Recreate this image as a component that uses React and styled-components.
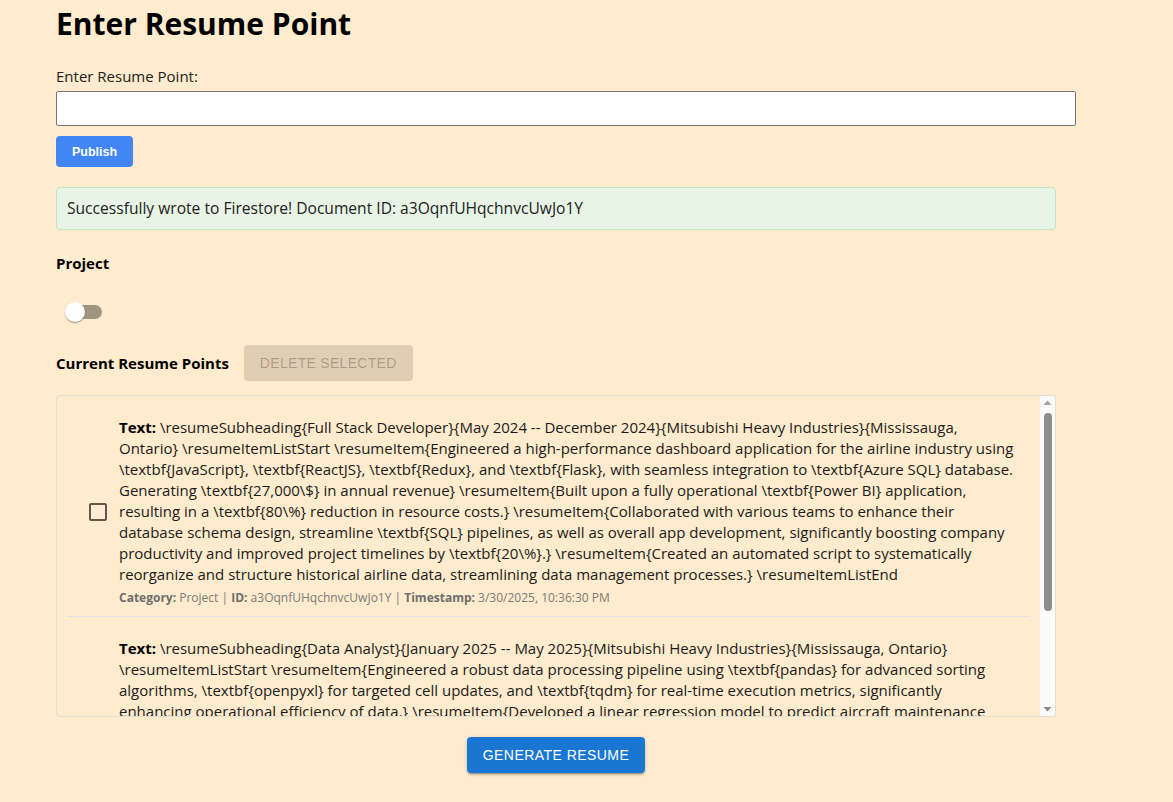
import React, { useState } from "react";
import styled, { createGlobalStyle } from "styled-components";

const GlobalStyle = createGlobalStyle`
  body {
    margin: 0;
    background: #ffebcd;
    font-family: "Open Sans", "Noto Sans", sans-serif;
    color: #111;
  }
`;

const points = [
  {
    id: "a3OqnfUHqchnvcUwJo1Y",
    category: "Project",
    timestamp: "3/30/2025, 10:36:30 PM",
    text: "\\resumeSubheading{Full Stack Developer}{May 2024 -- December 2024}{Mitsubishi Heavy Industries}{Mississauga, Ontario} \\resumeItemListStart \\resumeItem{Engineered a high-performance dashboard application for the airline industry using \\textbf{JavaScript}, \\textbf{ReactJS}, \\textbf{Redux}, and \\textbf{Flask}, with seamless integration to \\textbf{Azure SQL} database. Generating \\textbf{27,000\\$} in annual revenue} \\resumeItem{Built upon a fully operational \\textbf{Power BI} application, resulting in a \\textbf{80\\%} reduction in resource costs.} \\resumeItem{Collaborated with various teams to enhance their database schema design, streamline \\textbf{SQL} pipelines, as well as overall app development, significantly boosting company productivity and improved project timelines by \\textbf{20\\%}.} \\resumeItem{Created an automated script to systematically reorganize and structure historical airline data, streamlining data management processes.} \\resumeItemListEnd",
  },
  {
    id: "Kq81ZtVbnR2xLpW0aYc3",
    category: "Experience",
    timestamp: "3/30/2025, 10:31:12 PM",
    text: "\\resumeSubheading{Data Analyst}{January 2025 -- May 2025}{Mitsubishi Heavy Industries}{Mississauga, Ontario} \\resumeItemListStart \\resumeItem{Engineered a robust data processing pipeline using \\textbf{pandas} for advanced sorting algorithms, \\textbf{openpyxl} for targeted cell updates, and \\textbf{tqdm} for real-time execution metrics, significantly enhancing operational efficiency of data.} \\resumeItem{Developed a linear regression model to predict aircraft maintenance intervals using \\textbf{scikit-learn}, reducing unplanned downtime by \\textbf{15\\%}.} \\resumeItem{Automated weekly reporting workflows with \\textbf{Python} and \\textbf{Excel VBA}, saving over \\textbf{10 hours} of manual work per week.} \\resumeItem{Built interactive \\textbf{Power BI} dashboards to visualize fleet performance metrics for senior stakeholders and engineering leads.} \\resumeItemListEnd",
  },
];

const App = () => {
  const [project, setProject] = useState(false);
  const [checked, setChecked] = useState({});

  return (
    <>
      <GlobalStyle />
      <Page>
        <Title>Enter Resume Point</Title>
        <Label htmlFor="point">Enter Resume Point:</Label>
        <TextInput id="point" type="text" />
        <PublishButton>Publish</PublishButton>
        <Success>Successfully wrote to Firestore! Document ID: a3OqnfUHqchnvcUwJo1Y</Success>
        <SectionTitle>Project</SectionTitle>
        <Switch onClick={() => setProject(!project)}>
          <Track $on={project} />
          <Thumb $on={project} />
        </Switch>
        <ListHeader>
          <SectionTitle>Current Resume Points</SectionTitle>
          <MuiButton disabled>Delete Selected</MuiButton>
        </ListHeader>
        <ListFrame>
          <Scroller>
            {points.map((p) => (
              <Item key={p.id}>
                <Check onClick={() => setChecked({ ...checked, [p.id]: !checked[p.id] })}>
                  <svg width="24" height="24" viewBox="0 0 24 24" fill="currentColor">
                    <path d="M19 5v14H5V5h14m0-2H5c-1.1 0-2 .9-2 2v14c0 1.1.9 2 2 2h14c1.1 0 2-.9 2-2V5c0-1.1-.9-2-2-2z" />
                  </svg>
                </Check>
                <Body>
                  <PointText>
                    <b>Text:</b> {p.text}
                  </PointText>
                  <Meta>
                    <b>Category:</b> {p.category} | <b>ID:</b> {p.id} | <b>Timestamp:</b> {p.timestamp}
                  </Meta>
                </Body>
              </Item>
            ))}
          </Scroller>
          <Rail>
            <Arrow $color="#a3a3a3">
              <svg width="15" height="15" viewBox="0 0 15 15">
                <polygon points="3.5,9 11.5,9 7.5,4.5" fill="currentColor" />
              </svg>
            </Arrow>
            <RailThumb />
            <Arrow $color="#8a8a8a">
              <svg width="15" height="15" viewBox="0 0 15 15">
                <polygon points="3.5,6 11.5,6 7.5,10.5" fill="currentColor" />
              </svg>
            </Arrow>
          </Rail>
        </ListFrame>
        <Footer>
          <MuiButton $primary>Generate Resume</MuiButton>
        </Footer>
      </Page>
    </>
  );
};

export default App;


// Styles

const Page = styled.div`
  width: 1000px;
  padding: 4px 0 29px 56px;
`;

const Title = styled.h1`
  margin: 0;
  font-size: 30px;
  line-height: 40px;
  font-weight: 700;
  color: #000;
`;

const Label = styled.label`
  display: block;
  margin-top: 22px;
  font-size: 15px;
  line-height: 20px;
  color: #222;
`;

const TextInput = styled.input`
  display: block;
  box-sizing: border-box;
  width: 1020px;
  height: 35px;
  margin-top: 5px;
  padding: 8px;
  border: 1px solid #767676;
  border-radius: 2px;
  background: #fff;
  font-size: 15px;
`;

const PublishButton = styled.button`
  display: block;
  height: 31px;
  margin-top: 10px;
  padding: 0 16px;
  border: none;
  border-radius: 4px;
  background: #4285f4;
  color: #fff;
  font-family: "Liberation Sans", Arial, sans-serif;
  font-size: 12.5px;
  font-weight: 700;
  cursor: pointer;
`;

const Success = styled.div`
  margin-top: 20px;
  padding: 11px 10px;
  border: 1px solid #c2e5c6;
  border-radius: 4px;
  background: #e7f4e6;
  font-size: 15.6px;
  line-height: 19px;
  color: #222;
`;

const SectionTitle = styled.div`
  margin-top: 23px;
  font-size: 15px;
  line-height: 20px;
  font-weight: 700;
  color: #000;
`;

const Switch = styled.div`
  position: relative;
  width: 58px;
  height: 38px;
  margin-top: 20px;
  cursor: pointer;
`;

const Track = styled.span`
  position: absolute;
  left: 12px;
  top: 12px;
  width: 34px;
  height: 14px;
  border-radius: 7px;
  background: ${(p) => (p.$on ? "#90b8e8" : "#a09583")};
`;

const Thumb = styled.span`
  position: absolute;
  left: ${(p) => (p.$on ? "29px" : "9px")};
  top: 9px;
  width: 20px;
  height: 20px;
  border-radius: 50%;
  background: ${(p) => (p.$on ? "#1976d2" : "#fff")};
  box-shadow: 0 2px 1px -1px rgba(0, 0, 0, 0.2), 0 1px 1px rgba(0, 0, 0, 0.14), 0 1px 3px rgba(0, 0, 0, 0.12);
`;

const ListHeader = styled.div`
  display: flex;
  align-items: center;
  gap: 15px;
  margin-top: 14px;

  ${SectionTitle} {
    margin-top: 0;
  }
`;

const MuiButton = styled.button`
  height: 36px;
  padding: 6px 16px;
  border: none;
  border-radius: 4px;
  font-family: "Liberation Sans", Arial, sans-serif;
  font-size: 14px;
  font-weight: 400;
  letter-spacing: ${(p) => (p.$primary ? "0.45px" : "0.3px")};
  text-transform: uppercase;
  background: ${(p) => (p.$primary ? "#1976d2" : "rgba(0, 0, 0, 0.12)")};
  color: ${(p) => (p.$primary ? "#fff" : "rgba(0, 0, 0, 0.26)")};
  box-shadow: ${(p) =>
    p.$primary
      ? "0 3px 1px -2px rgba(0,0,0,0.2), 0 2px 2px rgba(0,0,0,0.14), 0 1px 5px rgba(0,0,0,0.12)"
      : "none"};
  cursor: pointer;

  &:disabled {
    cursor: default;
  }
`;

const ListFrame = styled.div`
  box-sizing: border-box;
  display: flex;
  height: 322px;
  margin-top: 14px;
  border: 1px solid #e4ddd2;
  border-radius: 4px;
  overflow: hidden;
`;

const Scroller = styled.div`
  flex: 1;
  min-width: 0;
  padding: 0 10px;
  overflow-y: auto;
  scrollbar-width: none;

  &::-webkit-scrollbar {
    display: none;
  }
`;

const Rail = styled.div`
  display: flex;
  flex-direction: column;
  align-items: center;
  flex: none;
  width: 15px;
  background: #fafafa;
`;

const Arrow = styled.span`
  display: flex;
  height: 15px;
  color: ${(p) => p.$color};

  &:last-child {
    margin-top: auto;
  }
`;

const RailThumb = styled.span`
  width: 8px;
  height: 198px;
  margin-top: 2px;
  border-radius: 4px;
  background: #8d8d8d;
`;

const Item = styled.div`
  display: flex;
  align-items: center;
  gap: 9px;
  padding: 21px 12px 9px 19px;
  border-bottom: 1px solid #dfe2e6;
`;

const Check = styled.span`
  display: flex;
  flex: none;
  color: #5e574d;
  cursor: pointer;
`;

const Body = styled.div`
  flex: 1;
  min-width: 0;
`;

const PointText = styled.div`
  font-size: 15px;
  line-height: 21px;
  color: #1b1b1b;

  b {
    color: #000;
  }
`;

const Meta = styled.div`
  margin-top: 4px;
  font-size: 12px;
  line-height: 18px;
  color: #7b7b7b;

  b {
    color: #6e6e6e;
  }
`;

const Footer = styled.div`
  display: flex;
  justify-content: center;
  margin-top: 20px;
`;
